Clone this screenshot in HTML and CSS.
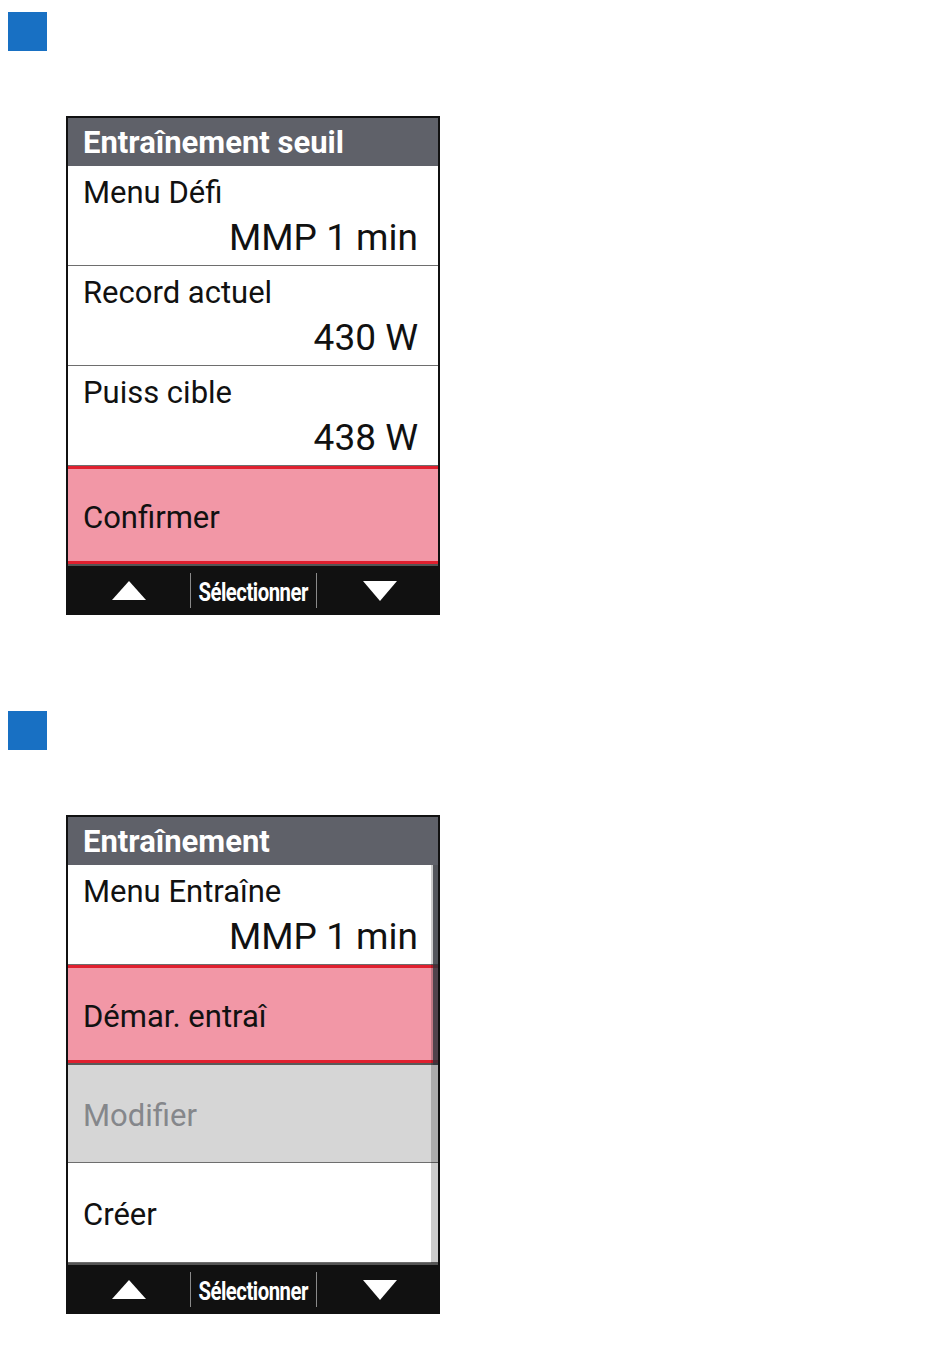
FILE: index.html
```html
<!DOCTYPE html>
<html>
<head>
    <title>Entraînement - écrans</title>
    <link rel="stylesheet" href="styles.css">
</head>
<body>
    <div class="page">
        <div class="marker"></div>

        <div class="device">
            <div class="title">Entraînement seuil</div>
            <div class="list">
                <div class="row">
                    <div class="label">Menu Défi</div>
                    <div class="value">MMP 1 min</div>
                </div>
                <div class="row">
                    <div class="label">Record actuel</div>
                    <div class="value">430 W</div>
                </div>
                <div class="row">
                    <div class="label">Puiss cible</div>
                    <div class="value">438 W</div>
                </div>
                <div class="row single sel">Confirmer</div>
            </div>
            <div class="footer">
                <div class="key">
                    <svg width="34" height="19" viewBox="0 0 34 19"><polygon points="17,0 34,19 0,19" fill="#fff"/></svg>
                </div>
                <div class="sep"></div>
                <div class="key"><span class="select">Sélectionner</span></div>
                <div class="sep"></div>
                <div class="key down">
                    <svg width="34" height="20" viewBox="0 0 34 20"><polygon points="0,0 34,0 17,20" fill="#fff"/></svg>
                </div>
            </div>
        </div>

        <div class="marker second"></div>

        <div class="device">
            <div class="title">Entraînement</div>
            <div class="list">
                <div class="row">
                    <div class="label">Menu Entraîne</div>
                    <div class="value">MMP 1 min</div>
                </div>
                <div class="row single sel">Démar. entraî</div>
                <div class="row single off">Modifier</div>
                <div class="row single">Créer</div>
                <!-- scrollbar drawn over the list -->
                <div class="track"><div class="thumb"></div></div>
            </div>
            <div class="footer">
                <div class="key">
                    <svg width="34" height="19" viewBox="0 0 34 19"><polygon points="17,0 34,19 0,19" fill="#fff"/></svg>
                </div>
                <div class="sep"></div>
                <div class="key"><span class="select">Sélectionner</span></div>
                <div class="sep"></div>
                <div class="key down">
                    <svg width="34" height="20" viewBox="0 0 34 20"><polygon points="0,0 34,0 17,20" fill="#fff"/></svg>
                </div>
            </div>
        </div>
    </div>
</body>
</html>
```

FILE: styles.css
```css
body {
    margin: 0;
    background: #fff;
    font-family: Roboto, "Liberation Sans", sans-serif;
    color: #111;
}
.page {
    padding: 12px 0 0 8px;
}
.marker {
    width: 39px;
    height: 39px;
    background: #1870c3;
}
.marker.second {
    margin-top: 96px;
}
.device {
    width: 374px;
    box-sizing: border-box;
    margin: 65px 0 0 58px;
    border: 2px solid #111;
    border-bottom: none;
}
.title {
    height: 48px;
    box-sizing: border-box;
    padding: 2px 0 0 15px;
    background: #5f6169;
    color: #fff;
    font-size: 31px;
    font-weight: bold;
    line-height: 46px;
}
.list {
    position: relative;
}
.row {
    height: 100px;
    box-sizing: border-box;
    padding: 9px 20px 0 15px;
    background: #fff;
    border-bottom: 1px solid #6e6e6e;
}
.label {
    font-size: 31px;
    line-height: 36px;
}
.value {
    margin-top: 7px;
    text-align: right;
    font-size: 37px;
    line-height: 40px;
}
.row.single {
    display: flex;
    align-items: center;
    padding-top: 5px;
    font-size: 31px;
    line-height: 36px;
}
.row.sel {
    height: 98px;
    background: #f297a6;
    border-top: 3px solid #e0202f;
    border-bottom: 3px solid #e0202f;
}
.sel + .row {
    border-top: 2px solid #5a5a5a;
}
.row.off {
    background: #d6d6d6;
    color: #85878b;
}
.track {
    position: absolute;
    top: 0;
    right: 0;
    bottom: 0;
    width: 7px;
    background: rgba(0, 0, 0, 0.2);
}
.thumb {
    margin-left: 2px;
    height: 200px;
    background: rgba(50, 52, 60, 0.78);
}
.footer {
    display: grid;
    grid-template-columns: 122px 1px 125px 1px 1fr;
    height: 51px;
    box-sizing: border-box;
    border-top: 2px solid #555;
    background: #111;
}
.key {
    display: flex;
    align-items: center;
    justify-content: center;
}
.key.down {
    padding-left: 4px;
}
.sep {
    margin: 7px 0;
    background: #8a8a8a;
}
.select {
    display: inline-block;
    padding-top: 3px;
    color: #fff;
    font-size: 26px;
    font-weight: bold;
    letter-spacing: -0.6px;
    transform: scaleX(0.78);
}
```
